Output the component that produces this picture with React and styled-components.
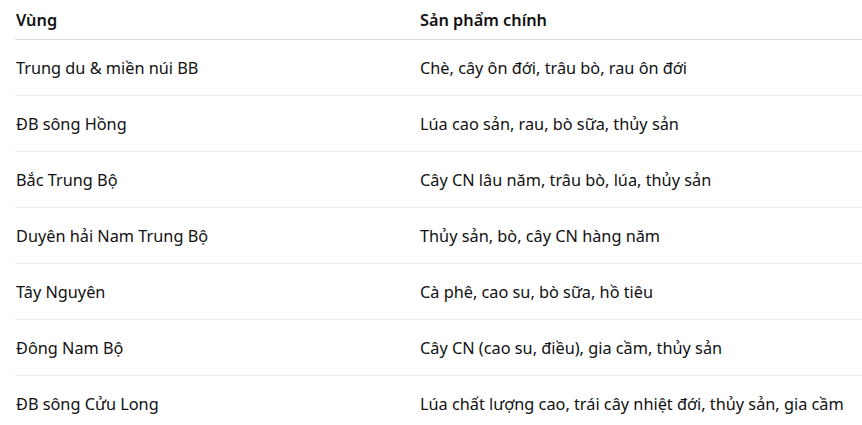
import React from 'react';
import styled, { createGlobalStyle } from 'styled-components';

const Global = createGlobalStyle`
  body {
    margin: 0;
    background: #fff;
    font-family: "Noto Sans", "Open Sans", sans-serif;
    color: #111;
  }
`;

const Wrap = styled.div`
  padding-left: 15px;
  overflow: hidden;
  height: 425px;
`;

const Table = styled.table`
  border-collapse: collapse;
  width: 860px;
  font-size: 16.3px;
`;

const Th = styled.th`
  text-align: left;
  font-weight: 600;
  height: 39px;
  padding: 0 0 0 1px;
  border-bottom: 1px solid #d9d9d9;
  width: ${p => p.$w || 'auto'};
`;

const Td = styled.td`
  height: 55px;
  padding: 0 0 0 1px;
  border-bottom: 1px solid #ececec;
`;

const rows = [
  ['Trung du & miền núi BB', 'Chè, cây ôn đới, trâu bò, rau ôn đới'],
  ['ĐB sông Hồng', 'Lúa cao sản, rau, bò sữa, thủy sản'],
  ['Bắc Trung Bộ', 'Cây CN lâu năm, trâu bò, lúa, thủy sản'],
  ['Duyên hải Nam Trung Bộ', 'Thủy sản, bò, cây CN hàng năm'],
  ['Tây Nguyên', 'Cà phê, cao su, bò sữa, hồ tiêu'],
  ['Đông Nam Bộ', 'Cây CN (cao su, điều), gia cầm, thủy sản'],
  ['ĐB sông Cửu Long', 'Lúa chất lượng cao, trái cây nhiệt đới, thủy sản, gia cầm'],
];

export default function App() {
  return (
    <Wrap>
      <Global />
      <Table>
        <thead>
          <tr>
            <Th $w="403px">Vùng</Th>
            <Th>Sản phẩm chính</Th>
          </tr>
        </thead>
        <tbody>
          {rows.map(r => (
            <tr key={r[0]}>
              <Td>{r[0]}</Td>
              <Td>{r[1]}</Td>
            </tr>
          ))}
        </tbody>
      </Table>
    </Wrap>
  );
}
